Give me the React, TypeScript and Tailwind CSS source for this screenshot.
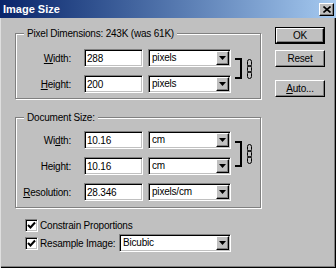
import React from "react";

const sunken =
  "border border-t-[#808080] border-l-[#808080] border-b-white border-r-white shadow-[inset_1px_1px_0_#000,inset_-1px_-1px_0_#c0c0c0]";
const raised =
  "border border-t-white border-l-white border-b-black border-r-black shadow-[inset_-1px_-1px_0_#808080]";

const Arrow = () => (
  <svg width="7" height="4" viewBox="0 0 7 4">
    <path d="M0 0h7L3.5 4z" fill="#000" />
  </svg>
);

const Select: React.FC<{ value: string; width: string }> = ({ value, width }) => (
  <div className={`flex h-[18px] items-center bg-white ${sunken} ${width}`}>
    <span className="flex-1 pl-[3px] leading-none">{value}</span>
    <div className={`mr-[1px] flex h-[14px] w-[13px] items-center justify-center bg-[#c0c0c0] ${raised}`}>
      <Arrow />
    </div>
  </div>
);

const Field: React.FC<{ label: React.ReactNode; value: string; unit: string }> = ({
  label,
  value,
  unit,
}) => (
  <div className="flex h-[18px] items-center">
    <span className="w-[55px] text-right">{label}</span>
    <div className={`ml-[13px] flex h-[18px] w-[59px] items-center bg-white pl-[2px] ${sunken}`}>
      {value}
    </div>
    <div className="ml-[5px]">
      <Select value={unit} width="w-[83px]" />
    </div>
  </div>
);

const Chain = () => (
  <svg width="7" height="20" viewBox="0 0 7 20" className="ml-[4px] self-center">
    <rect x="1.5" y="0.5" width="4" height="7" rx="2" fill="none" stroke="#000" />
    <rect x="1.5" y="6.5" width="4" height="7" rx="2" fill="none" stroke="#000" />
    <rect x="1.5" y="12.5" width="4" height="7" rx="2" fill="none" stroke="#000" />
  </svg>
);

const Bracket: React.FC<{ h: string; mt: string }> = ({ h, mt }) => (
  <div className={`ml-[4px] flex self-start ${h} ${mt}`}>
    <div className="w-[7px] border-y-2 border-r-2 border-black" />
    <Chain />
  </div>
);

const Group: React.FC<{ title: string; pad: string; children: React.ReactNode }> = ({
  title,
  pad,
  children,
}) => (
  <fieldset
    className={`w-[246px] border border-[#808080] shadow-[inset_1px_1px_0_#fff,1px_1px_0_#fff] ${pad}`}
  >
    <legend className="ml-[8px] bg-[#c0c0c0] px-[3px] leading-[13px]">{title}</legend>
    {children}
  </fieldset>
);

const Check: React.FC<{ label: React.ReactNode }> = ({ label }) => (
  <div className="flex items-center whitespace-nowrap">
    <div className={`flex h-[13px] w-[13px] items-center justify-center bg-white ${sunken}`}>
      <svg width="9" height="9" viewBox="0 0 9 9">
        <path d="M1 4l2.5 2.5L8 1.5" fill="none" stroke="#000" strokeWidth="2" />
      </svg>
    </div>
    <span className="ml-[2px]">{label}</span>
  </div>
);

export default function App() {
  return (
    <div className="flex h-[268px] w-[336px] flex-col bg-[#c0c0c0] font-['Liberation_Sans',Arial,sans-serif] text-[10px] tracking-[-0.2px] text-black shadow-[inset_1px_0_0_#dfdfdf,inset_-1px_-1px_0_#000,inset_-2px_-2px_0_#808080]">
      <div className="flex h-[18px] items-center bg-gradient-to-r from-[#0a246a] to-[#a6caf0] pl-[3px]">
        <span className="text-[11px] font-bold tracking-normal text-white">Image Size</span>
        <div className={`ml-auto mr-[2px] flex h-[13px] w-[15px] items-center justify-center bg-[#c0c0c0] ${raised}`}>
          <svg width="8" height="7" viewBox="0 0 8 7">
            <path d="M0.5 0.5l7 6M7.5 0.5l-7 6" stroke="#000" strokeWidth="1.6" />
          </svg>
        </div>
      </div>

      <div className="flex pl-[15px] pt-[9px]">
        <div className="flex flex-col">
          <Group title="Pixel Dimensions: 243K (was 61K)" pad="pt-[9px] pb-[5px]">
            <div className="flex">
              <div className="flex flex-col gap-[8px]">
                <Field label={<><u>W</u>idth:</>} value="288" unit="pixels" />
                <Field label={<><u>H</u>eight:</>} value="200" unit="pixels" />
              </div>
              <Bracket h="h-[21px]" mt="mt-[9px]" />
            </div>
          </Group>

          <div className="mt-[12px]">
            <Group title="Document Size:" pad="pt-[7px] pb-[6px]">
              <div className="flex">
                <div className="flex flex-col gap-[8px]">
                  <Field label={<>Wi<u>d</u>th:</>} value="10.16" unit="cm" />
                  <Field label={<>Hei<u>g</u>ht:</>} value="10.16" unit="cm" />
                </div>
                <Bracket h="h-[26px]" mt="mt-[10px]" />
              </div>
              <div className="mt-[8px]">
                <Field label={<><u>R</u>esolution:</>} value="28.346" unit="pixels/cm" />
              </div>
            </Group>
          </div>

          <div className="mt-[8px] flex h-[18px] items-center pl-[10px]">
            <Check label="Constrain Proportions" />
          </div>
          <div className="flex h-[18px] items-center pl-[10px]">
            <div className="w-[94px]">
              <Check label="Resample Image:" />
            </div>
            <Select value="Bicubic" width="w-[112px]" />
          </div>
        </div>

        <div className="ml-[14px] flex w-[50px] flex-col">
          <div className="border border-black">
            <div className={`flex h-[15px] items-center justify-center ${raised}`}>OK</div>
          </div>
          <div className={`mt-[6px] flex h-[17px] items-center justify-center ${raised}`}>Reset</div>
          <div className={`mt-[13px] flex h-[17px] items-center justify-center ${raised}`}>
            <span>
              <u>A</u>uto...
            </span>
          </div>
        </div>
      </div>
    </div>
  );
}
